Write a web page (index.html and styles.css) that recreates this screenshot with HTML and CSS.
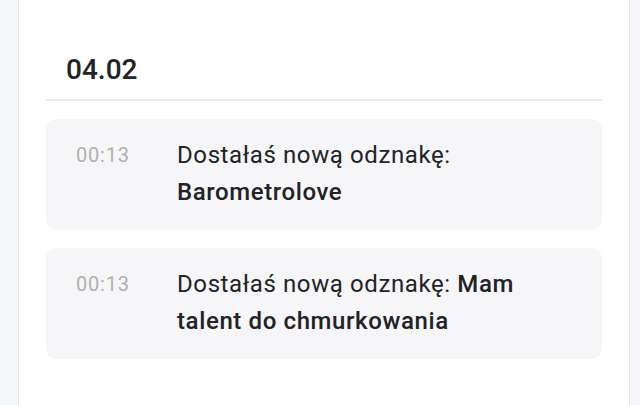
FILE: index.html
```html
<!DOCTYPE html>
<html lang="pl">
<head>
<meta charset="utf-8">
<link rel="stylesheet" href="styles.css">
</head>
<body>
<div class="page">
  <main class="panel">
    <section class="day">
      <h2 class="day-title">04.02</h2>
      <div class="divider"></div>
      <ul class="list">
        <li class="item">
          <span class="time">00:13</span>
          <p class="msg">Dostałaś nową odznakę: <strong>Barometrolove</strong></p>
        </li>
        <li class="item">
          <span class="time">00:13</span>
          <p class="msg">Dostałaś nową odznakę: <strong>Mam talent do chmurkowania</strong></p>
        </li>
      </ul>
    </section>
  </main>
</div>
</body>
</html>
```

FILE: styles.css
```css
html, body {
  margin: 0;
  padding: 0;
  height: 100%;
}
body {
  background: #f5f6fa;
  font-family: Roboto, "Noto Sans", sans-serif;
  color: #222326;
  overflow: hidden;
}
.page {
  display: flex;
  height: 100%;
  padding: 0 10px 0 18px;
}
.panel {
  flex: 1;
  background: #ffffff;
  border-left: 1px solid #e3e6ee;
  border-right: 1px solid #e3e6ee;
  padding: 0 27px;
}
.day {
  padding-top: 53px;
}
.day-title {
  margin: 0;
  padding-left: 20px;
  font-family: "Roboto Medium", Roboto, sans-serif;
  font-size: 28px;
  line-height: 33px;
  font-weight: 500;
  color: #222326;
}
.divider {
  margin-top: 13px;
  height: 2px;
  background: #e6e8ea;
}
.list {
  list-style: none;
  margin: 18px 0 0;
  padding: 0;
  display: flex;
  flex-direction: column;
  gap: 18px;
}
.item {
  display: flex;
  align-items: flex-start;
  background: #f6f6f8;
  border-radius: 10px;
  padding: 18px 30px 19px;
}
.time {
  flex: 0 0 101px;
  font-size: 20px;
  line-height: 37px;
  color: #b0b0b2;
  letter-spacing: 0.8px;
}
.msg {
  margin: 0;
  flex: 1;
  font-size: 24px;
  line-height: 37px;
  letter-spacing: 0.6px;
  color: #222326;
}
.msg strong {
  font-family: "Roboto Medium", Roboto, sans-serif;
  font-weight: 500;
}
```
